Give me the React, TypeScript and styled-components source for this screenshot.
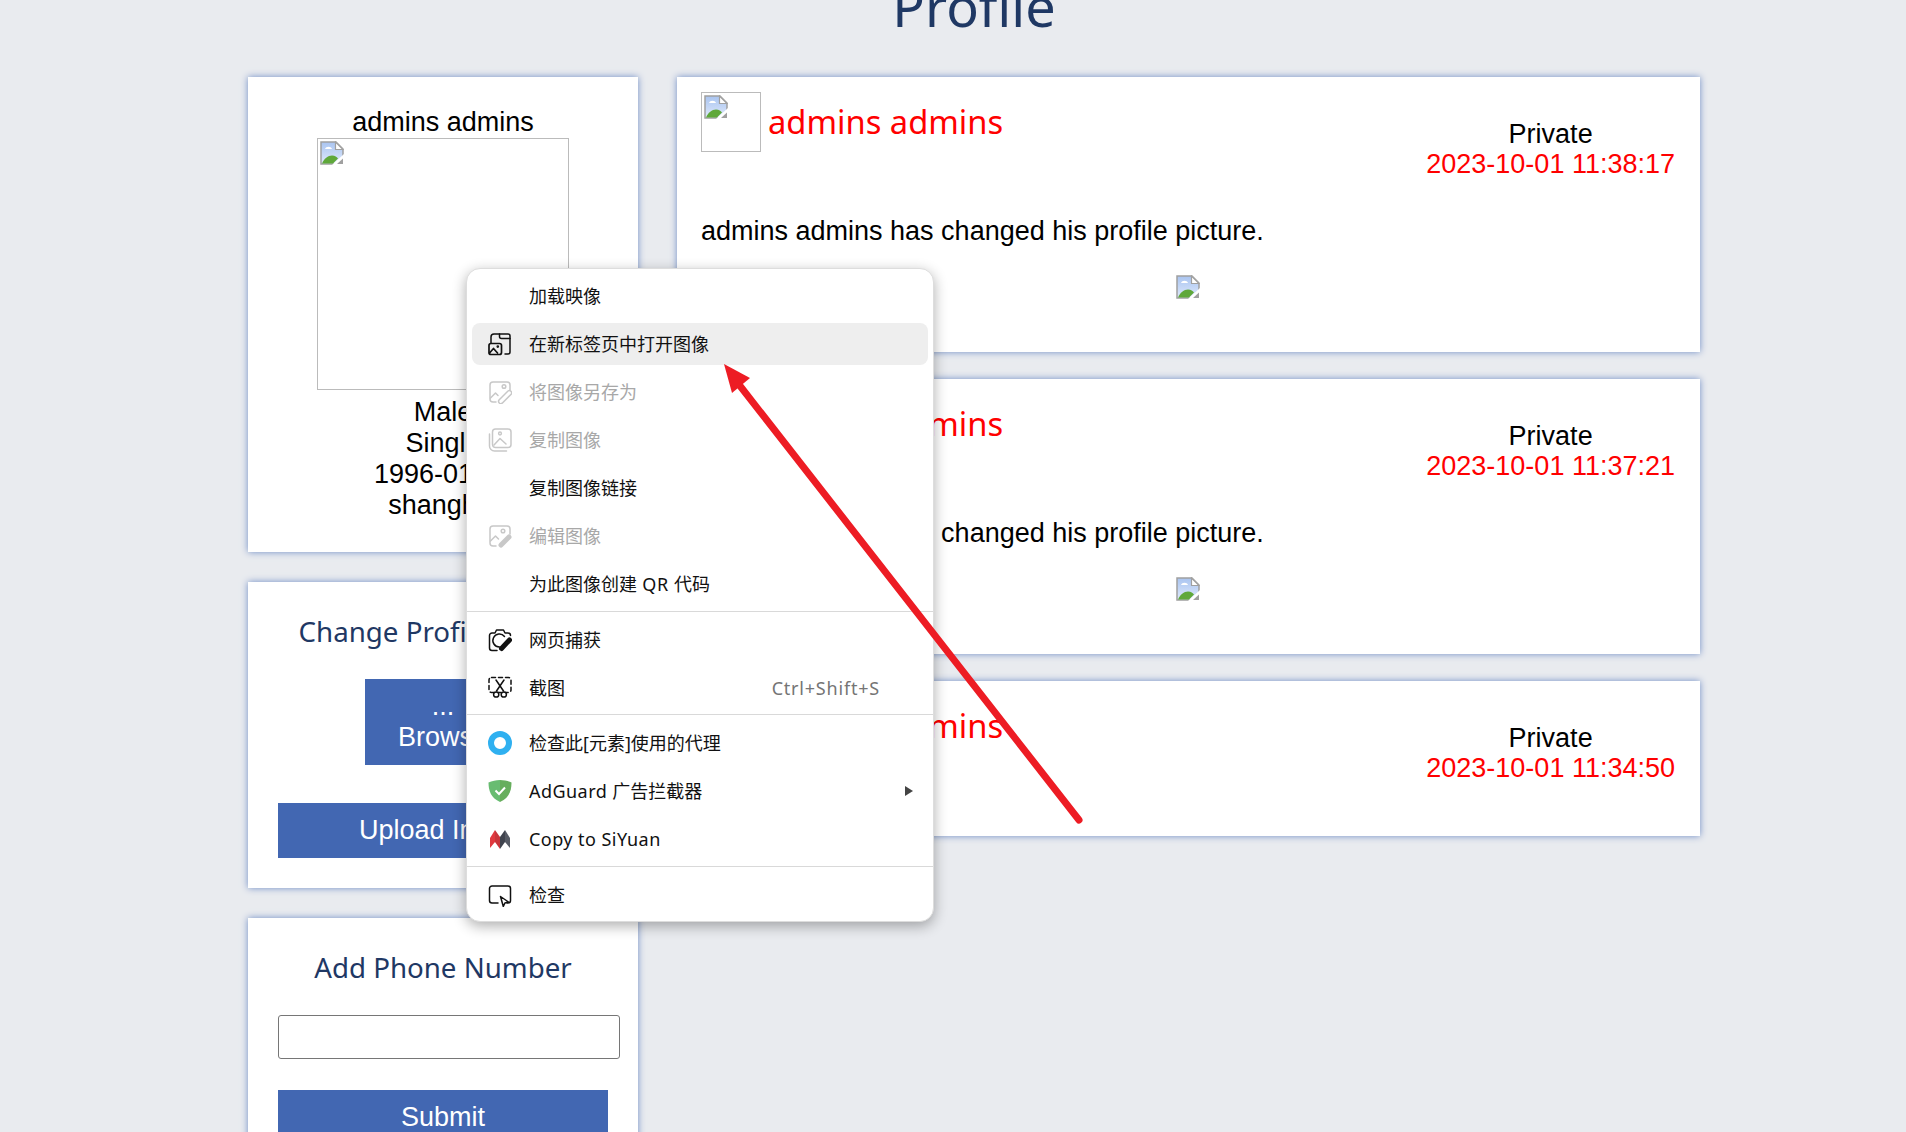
import React from 'react';
import styled, { createGlobalStyle } from 'styled-components';

const GlobalStyle = createGlobalStyle`
  html, body {
    margin: 0;
    height: 1132px;
    overflow: hidden;
    background: #e9ebef;
    font-family: "Liberation Sans", Arial, sans-serif;
  }
  * { box-sizing: border-box; }
`;

const Page = styled.div`
  position: relative;
  width: 1906px;
  height: 1132px;
  overflow: hidden;
`;

const Title = styled.h1`
  margin: -24px 0 0;
  height: 101px;
  padding-left: 42px;
  text-align: center;
  font: 400 54px/60px "Noto Sans", sans-serif;
  color: #1f3864;
`;

const Columns = styled.div`
  display: flex;
  gap: 39px;
  padding-left: 248px;
`;

const LeftColumn = styled.div`
  display: flex;
  flex-direction: column;
  gap: 30px;
  width: 390px;
`;

const RightColumn = styled.div`
  display: flex;
  flex-direction: column;
  gap: 27px;
  width: 1023px;
`;

const Card = styled.section`
  background: #fff;
  box-shadow: 0 0 7px #6f8cc6;
`;

const ProfileCard = styled(Card)`
  padding: 30px 0 31px;
  text-align: center;
  font-size: 27px;
  line-height: 31px;
  color: #000;
`;

const ProfilePicture = styled.div`
  width: 252px;
  height: 252px;
  margin: 0 auto 7px;
  padding: 2px;
  border: 1px solid #bbb;
  text-align: left;
`;

const FormCard = styled(Card)`
  padding: 31px 30px 30px;
`;

const FormTitle = styled.h2`
  margin: 0;
  text-align: center;
  font: 400 27.7px/36px "Noto Sans", sans-serif;
  color: #1f3864;
`;

const BlueButton = styled.button`
  display: block;
  width: 330px;
  height: 55px;
  padding: 0;
  border: 0;
  background: #4267b2;
  color: #fff;
  text-align: center;
  font: 400 27px/31px "Liberation Sans", Arial, sans-serif;
`;

const BrowseButton = styled(BlueButton)`
  width: 156px;
  height: 86px;
  margin: 30px auto 38px;
`;

const PhoneInput = styled.input`
  display: block;
  width: 342px;
  height: 44px;
  margin: 30px 0 31px;
  border: 1px solid #767676;
  border-radius: 3px;
  background: #fff;
`;

const PostCard = styled(Card)`
  padding: 15px 25px 0 24px;
  height: 275px;
  &:last-child { height: 155px; }
`;

const PostHead = styled.div`
  display: flex;
  justify-content: space-between;
  height: 88px;
`;

const Author = styled.div`
  display: flex;
  align-items: flex-start;
  gap: 7px;
`;

const Avatar = styled.div`
  width: 60px;
  height: 60px;
  padding: 2px;
  border: 1px solid #bbb;
`;

const AuthorName = styled.div`
  margin-top: 8px;
  font: 400 32.7px/44px "Noto Sans", sans-serif;
  color: #f00;
`;

const Meta = styled.div`
  padding-top: 27px;
  text-align: center;
  font-size: 27px;
  line-height: 30px;
  color: #000;
`;

const MetaDate = styled.div`
  color: #f00;
`;

const PostText = styled.p`
  margin: 36px 0 0;
  font-size: 27px;
  line-height: 31px;
  color: #000;
`;

const PostImage = styled.div`
  display: flex;
  justify-content: center;
  margin-top: 28px;
`;

const Menu = styled.div`
  position: absolute;
  left: 466px;
  top: 268px;
  width: 468px;
  height: 654px;
  padding: 6px 0;
  background: #fff;
  border: 1px solid #ddd;
  border-radius: 14px;
  box-shadow: 0 4px 14px rgba(0, 0, 0, 0.32);
  font: 400 18px/24px "Noto Sans", "Noto Sans CJK SC", sans-serif;
`;

const MenuRow = styled.div<{ $active?: boolean; $disabled?: boolean }>`
  display: flex;
  align-items: center;
  height: 42px;
  margin: 0 5px 6px;
  padding-left: 16px;
  border-radius: 8px;
  background: ${(p) => (p.$active ? '#eeeeee' : 'transparent')};
  color: ${(p) => (p.$disabled ? '#a8a8a8' : '#111')};
  &:last-child { margin-bottom: 0; }
`;

const MenuIcon = styled.span`
  display: flex;
  flex: 0 0 24px;
  width: 24px;
  height: 24px;
  margin-right: 17px;
`;

const MenuLabel = styled.span`
  flex: 1;
`;

const Latin = styled.span<{ $wide?: boolean }>`
  letter-spacing: ${(p) => (p.$wide ? '0.6px' : '0.45px')};
`;

const Shortcut = styled.span`
  margin-right: 48px;
  letter-spacing: 0.8px;
  color: #757575;
`;

const SubmenuArrow = styled.span`
  width: 0;
  height: 0;
  margin-right: 15px;
  border-left: 8px solid #444;
  border-top: 5.5px solid transparent;
  border-bottom: 5.5px solid transparent;
`;

const Divider = styled.div<{ $pull?: boolean }>`
  height: 1px;
  margin: ${(p) => (p.$pull ? '-1px' : '0')} 0 7px;
  background: #d9d9d9;
`;

const ArrowOverlay = styled.svg`
  position: absolute;
  left: 0;
  top: 0;
  pointer-events: none;
`;

const BrokenImage = () => (
  <svg width="24" height="24" viewBox="0 0 24 24">
    <defs>
      <linearGradient id="sky" x1="0" y1="0" x2="0" y2="1">
        <stop offset="0" stopColor="#a9c4f0" />
        <stop offset="1" stopColor="#dfe9fb" />
      </linearGradient>
    </defs>
    <path d="M1 1H16L23 8V23H1Z" fill="url(#sky)" stroke="#a0a0a0" strokeWidth="1.5" />
    <path d="M15.5 1V8.5H23L15.5 1Z" fill="#fff" stroke="#a0a0a0" strokeWidth="1.2" />
    <path d="M5 8c1-3 6-3 7 0Z" fill="#fff" />
    <path d="M2 22.5c2-5 6-8 10-8 3 0 5 1.5 6 3l-5 5Z" fill="#5fa83a" />
    <path d="M12 24L24 13V24Z" fill="#fff" />
    <path d="M17 23L23 17.5V23Z" fill="#a0a0a0" />
  </svg>
);

const Stroke = ({ children, color = '#111' }: { children: React.ReactNode; color?: string }) => (
  <svg width="24" height="24" viewBox="0 0 24 24" fill="none" stroke={color} strokeWidth="1.5" strokeLinecap="round" strokeLinejoin="round">
    {children}
  </svg>
);

const grey = '#c8c8c8';

const OpenTabIcon = () => (
  <Stroke>
    <path d="M3 11V5a3 3 0 0 1 3-3h14a2 2 0 0 1 2 2v16a2 2 0 0 1-2 2h-3" />
    <path d="M11.5 2v2.5a2 2 0 0 0 2 2H22" />
    <rect x="1" y="11.5" width="12.5" height="11" rx="2" strokeWidth="1.7" />
    <path d="M1.5 21l4-4.5 4 4.5" strokeWidth="1.7" />
    <circle cx="9.8" cy="14.6" r="0.6" />
  </Stroke>
);

const SaveIcon = () => (
  <Stroke color={grey}>
    <path d="M8 22H5a3 3 0 0 1-3-3V5a3 3 0 0 1 3-3h14a3 3 0 0 1 3 3v5" />
    <circle cx="16" cy="6.5" r="1.8" />
    <path d="M2.5 18l5-5 2.5 2.5" />
    <path d="M11 20l9-9a2.3 2.3 0 0 1 3.2 3.2l-9 9a2.3 2.3 0 0 1-3.2-3.2Z" />
  </Stroke>
);

const CopyIcon = () => (
  <Stroke color={grey}>
    <rect x="4.5" y="1" width="18.5" height="18.5" rx="3" />
    <path d="M1.5 6v12a5 5 0 0 0 5 5h12" />
    <path d="M6 17l6-6.5 6 5.5" />
    <circle cx="12" cy="5.5" r="1.4" />
  </Stroke>
);

const EditIcon = () => (
  <Stroke color={grey}>
    <path d="M8 22H5a3 3 0 0 1-3-3V5a3 3 0 0 1 3-3h14a3 3 0 0 1 3 3v5" />
    <circle cx="15" cy="7" r="1.8" />
    <path d="M2.5 17l5-5 3 3" />
    <path d="M13 21l8-8" strokeWidth="5" />
  </Stroke>
);

const CaptureIcon = () => (
  <Stroke>
    <path d="M9 22.5H4a2.5 2.5 0 0 1-2.5-2.5V7.5A2.5 2.5 0 0 1 4 5h3l1.5-3h7l1.5 3h3a2.5 2.5 0 0 1 2.5 2.5" />
    <path d="M16.5 8.5a6.5 6.5 0 1 0-5 10.5" />
    <path d="M13.5 20.5l8-8.5" strokeWidth="5" />
  </Stroke>
);

const ScissorsIcon = () => (
  <Stroke>
    <rect x="1" y="1.5" width="22" height="15" rx="2.5" strokeDasharray="4 3" />
    <path d="M8 4l7.5 11M16 4L8.5 15" fill="none" />
    <circle cx="8.2" cy="18.5" r="2.6" fill="#fff" />
    <circle cx="15.8" cy="18.5" r="2.6" fill="#fff" />
  </Stroke>
);

const ProxyIcon = () => (
  <svg width="24" height="24" viewBox="0 0 24 24">
    <circle cx="12" cy="12" r="9" fill="#fff" stroke="#2fb0f0" strokeWidth="6" />
  </svg>
);

const ShieldIcon = () => (
  <svg width="24" height="24" viewBox="0 0 24 24">
    <path d="M12 1C8 1 4 2 0.5 3.5 0.5 12 3 19 12 23Z" fill="#68bc71" />
    <path d="M12 1c4 0 8 1 11.5 2.5C23.5 12 21 19 12 23Z" fill="#67ae5d" />
    <path d="M7.5 11.5l3.5 3.5 6-6.5" fill="none" stroke="#fff" strokeWidth="2" />
  </svg>
);

const SiyuanIcon = () => (
  <svg width="24" height="24" viewBox="0 0 24 24">
    <path d="M2 21V11L7 3V15Z" fill="#e0393f" />
    <path d="M7 3L12 10V22L7 15Z" fill="#c9343a" />
    <path d="M12 10L17 3V15L12 22Z" fill="#3f434d" />
    <path d="M17 3L22 11V21L17 15Z" fill="#565a64" />
  </svg>
);

const InspectIcon = () => (
  <Stroke>
    <path d="M10 20H4a2.5 2.5 0 0 1-2.5-2.5V5.5A2.5 2.5 0 0 1 4 3h16a2.5 2.5 0 0 1 2.5 2.5v12A2.5 2.5 0 0 1 20 20h-1" />
    <path d="M12.5 13.5l8 5.5-3.6 1-1.6 3.5Z" />
  </Stroke>
);

const posts = [
  { date: '2023-10-01 11:38:17', text: 'admins admins has changed his profile picture.' },
  { date: '2023-10-01 11:37:21', text: 'admins admins has changed his profile picture.' },
  { date: '2023-10-01 11:34:50' },
];

const App = (): JSX.Element => {
  return (
    <Page>
      <GlobalStyle />
      <Title>Profile</Title>
      <Columns>
        <LeftColumn>
          <ProfileCard>
            admins admins
            <ProfilePicture><BrokenImage /></ProfilePicture>
            <div>Male</div>
            <div>Single</div>
            <div>1996-01-01</div>
            <div>shanghai</div>
          </ProfileCard>
          <FormCard>
            <FormTitle>Change Profile Picture</FormTitle>
            <BrowseButton>...<br />Browse</BrowseButton>
            <BlueButton>Upload Image</BlueButton>
          </FormCard>
          <FormCard>
            <FormTitle>Add Phone Number</FormTitle>
            <PhoneInput type="text" />
            <BlueButton>Submit</BlueButton>
          </FormCard>
        </LeftColumn>
        <RightColumn>
          {posts.map((post) => (
            <PostCard key={post.date}>
              <PostHead>
                <Author>
                  <Avatar><BrokenImage /></Avatar>
                  <AuthorName>admins admins</AuthorName>
                </Author>
                <Meta>
                  Private
                  <MetaDate>{post.date}</MetaDate>
                </Meta>
              </PostHead>
              {post.text && <PostText>{post.text}</PostText>}
              {post.text && <PostImage><BrokenImage /></PostImage>}
            </PostCard>
          ))}
        </RightColumn>
      </Columns>
      <Menu>
        <MenuRow><MenuIcon /><MenuLabel>加载映像</MenuLabel></MenuRow>
        <MenuRow $active><MenuIcon><OpenTabIcon /></MenuIcon><MenuLabel>在新标签页中打开图像</MenuLabel></MenuRow>
        <MenuRow $disabled><MenuIcon><SaveIcon /></MenuIcon><MenuLabel>将图像另存为</MenuLabel></MenuRow>
        <MenuRow $disabled><MenuIcon><CopyIcon /></MenuIcon><MenuLabel>复制图像</MenuLabel></MenuRow>
        <MenuRow><MenuIcon /><MenuLabel>复制图像链接</MenuLabel></MenuRow>
        <MenuRow $disabled><MenuIcon><EditIcon /></MenuIcon><MenuLabel>编辑图像</MenuLabel></MenuRow>
        <MenuRow><MenuIcon /><MenuLabel>为此图像创建<Latin $wide> QR </Latin>代码</MenuLabel></MenuRow>
        <Divider />
        <MenuRow><MenuIcon><CaptureIcon /></MenuIcon><MenuLabel>网页捕获</MenuLabel></MenuRow>
        <MenuRow><MenuIcon><ScissorsIcon /></MenuIcon><MenuLabel>截图</MenuLabel><Shortcut>Ctrl+Shift+S</Shortcut></MenuRow>
        <Divider $pull />
        <MenuRow><MenuIcon><ProxyIcon /></MenuIcon><MenuLabel>检查此[元素]使用的代理</MenuLabel></MenuRow>
        <MenuRow><MenuIcon><ShieldIcon /></MenuIcon><MenuLabel><Latin>AdGuard </Latin>广告拦截器</MenuLabel><SubmenuArrow /></MenuRow>
        <MenuRow><MenuIcon><SiyuanIcon /></MenuIcon><MenuLabel><Latin>Copy to SiYuan</Latin></MenuLabel></MenuRow>
        <Divider />
        <MenuRow><MenuIcon><InspectIcon /></MenuIcon><MenuLabel>检查</MenuLabel></MenuRow>
      </Menu>
      <ArrowOverlay width="1906" height="1132" viewBox="0 0 1906 1132">
        <path d="M1079 820L737 382" fill="none" stroke="#ed1c24" strokeWidth="7" strokeLinecap="round" />
        <path d="M724 364L750 378L732 393Z" fill="#ed1c24" />
      </ArrowOverlay>
    </Page>
  );
};

export default App;
